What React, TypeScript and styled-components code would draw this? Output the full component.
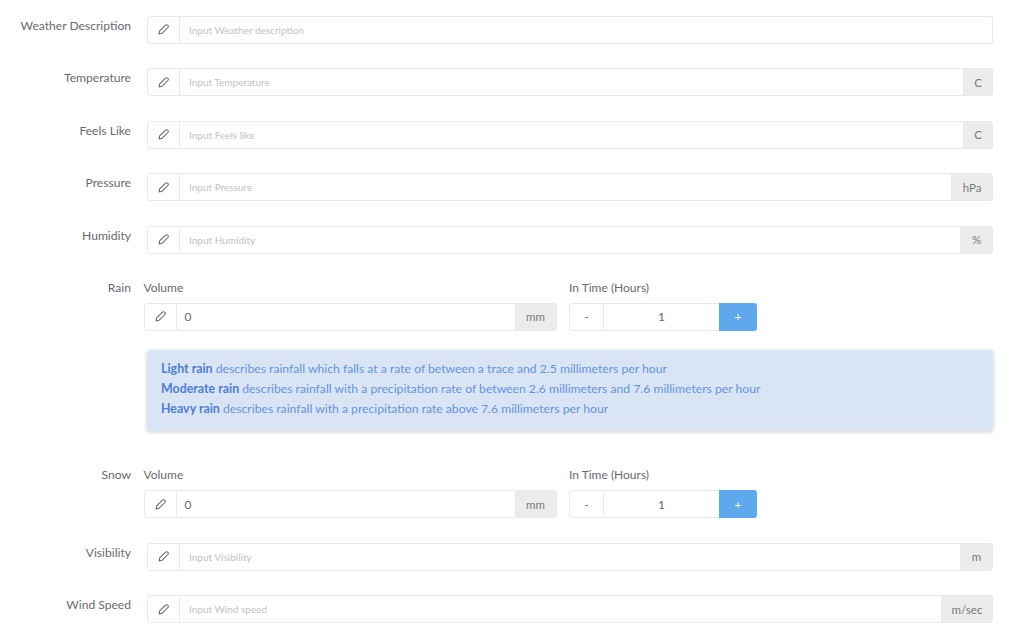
import React from "react";
import styled, { createGlobalStyle } from "styled-components";

const Global = createGlobalStyle`
  html, body { margin: 0; padding: 0; background: #fff; }
  body { font-family: "Lato", "Noto Sans", sans-serif; color: #5c6066; overflow: hidden; }
`;

const Page = styled.div`
  width: 1024px;
  height: 643px;
  padding: 15.75px 31px 0 0;
  box-sizing: border-box;
  display: flex;
  flex-direction: column;
  & > * { flex: none; }
`;

const Row = styled.div<{ $gap?: number }>`
  display: grid;
  grid-template-columns: 131px 1fr;
  column-gap: 16px;
  height: 28px;
  margin-bottom: ${(p) => p.$gap ?? 24.5}px;
`;

const Label = styled.div`
  text-align: right;
  font-size: 12.1px;
  line-height: 20px;
  color: #666a70;
`;

const Group = styled.div`
  display: flex;
  height: 28px;
  box-sizing: border-box;
`;

const IconBox = styled.div`
  width: 33px;
  flex: none;
  box-sizing: border-box;
  border: 1px solid #e4eaee;
  border-radius: 3px 0 0 3px;
  display: flex;
  align-items: center;
  justify-content: center;
`;

const Field = styled.div<{ $placeholder?: boolean; $open?: boolean }>`
  flex: 1;
  box-sizing: border-box;
  border: 1px solid #e4eaee;
  border-left: none;
  ${(p) => (p.$open ? "border-right: none;" : "border-radius: 0 3px 3px 0;")}
  padding-left: ${(p) => (p.$placeholder ? 9 : 8)}px;
  display: flex;
  align-items: center;
  font-size: ${(p) => (p.$placeholder ? 10 : 12)}px;
  color: ${(p) => (p.$placeholder ? "#bfc2c5" : "#666a70")};
`;

const Addon = styled.div<{ $width: number }>`
  flex: none;
  box-sizing: border-box;
  width: ${(p) => p.$width}px;
  background: #ececec;
  border: 1px solid #e6eaec;
  border-radius: 0 3px 3px 0;
  display: flex;
  align-items: center;
  justify-content: center;
  font-size: 11.5px;
  color: #74787c;
`;

const SplitRow = styled.div<{ $gap: number }>`
  display: grid;
  grid-template-columns: 131px 413px 188px;
  column-gap: 12.5px;
  margin-bottom: ${(p) => p.$gap}px;
`;

const Col = styled.div`
  display: flex;
  flex-direction: column;
  gap: 7.25px;
`;

const SubLabel = styled.div`
  font-size: 12px;
  line-height: 16px;
  color: #666a70;
`;

const SplitLabel = styled(Label)`
  line-height: 16px;
`;

const Stepper = styled.div`
  display: flex;
  height: 28px;
`;

const Minus = styled.div`
  width: 35px;
  box-sizing: border-box;
  border: 1px solid #e4eaee;
  border-radius: 3px 0 0 3px;
  display: flex;
  align-items: center;
  justify-content: center;
  font-size: 12px;
  color: #666a70;
`;

const Count = styled.div`
  flex: 1;
  box-sizing: border-box;
  border-top: 1px solid #e4eaee;
  border-bottom: 1px solid #e4eaee;
  display: flex;
  align-items: center;
  justify-content: center;
  font-size: 12px;
  color: #666a70;
`;

const Plus = styled.div`
  width: 38px;
  background: #5fa8ee;
  border-radius: 0 3px 3px 0;
  display: flex;
  align-items: center;
  justify-content: center;
  font-size: 12px;
  color: #fff;
`;

const Alert = styled.div`
  margin: 0 0 36.25px 147px;
  height: 81px;
  box-sizing: border-box;
  padding: 9px 14px;
  background: #d9e4f5;
  border-radius: 3px;
  box-shadow: 0 1px 4px rgba(0, 0, 0, 0.2);
  font-size: 12.18px;
  line-height: 20px;
  color: #6494e0;
  b { font-weight: 700; font-size: 12.4px; color: #4a7fd6; }
`;

const Pencil = () => (
  <svg width="11" height="11" viewBox="0 0 12 12" fill="none" stroke="#626669" strokeWidth="1.1" strokeLinejoin="round">
    <path d="M8.2 1.2a1.5 1.5 0 0 1 2.2 0l.4.4a1.5 1.5 0 0 1 0 2.2L4.4 10.2 1.2 10.8l.6-3.2z" />
  </svg>
);

const InputRow = ({ label, placeholder, unit, unitWidth, gap }: { label: string; placeholder: string; unit?: string; unitWidth?: number; gap?: number }) => (
  <Row $gap={gap}>
    <Label>{label}</Label>
    <Group>
      <IconBox><Pencil /></IconBox>
      <Field $placeholder $open={!!unit}>{placeholder}</Field>
      {unit && <Addon $width={unitWidth ?? 32}>{unit}</Addon>}
    </Group>
  </Row>
);

const Split = ({ label, gap }: { label: string; gap: number }) => (
  <SplitRow $gap={gap}>
    <SplitLabel>{label}</SplitLabel>
    <Col>
      <SubLabel>Volume</SubLabel>
      <Group>
        <IconBox><Pencil /></IconBox>
        <Field $open>0</Field>
        <Addon $width={42}>mm</Addon>
      </Group>
    </Col>
    <Col>
      <SubLabel>In Time (Hours)</SubLabel>
      <Stepper>
        <Minus>-</Minus>
        <Count>1</Count>
        <Plus>+</Plus>
      </Stepper>
    </Col>
  </SplitRow>
);

export default function App() {
  return (
    <Page>
      <Global />
      <InputRow label="Weather Description" placeholder="Input Weather description" />
      <InputRow label="Temperature" placeholder="Input Temperature" unit="C" unitWidth={30} />
      <InputRow label="Feels Like" placeholder="Input Feels like" unit="C" unitWidth={30} />
      <InputRow label="Pressure" placeholder="Input Pressure" unit="hPa" unitWidth={42} />
      <InputRow label="Humidity" placeholder="Input Humidity" unit="%" unitWidth={33} gap={25.75} />
      <Split label="Rain" gap={19} />
      <Alert>
        <div><b>Light rain</b> describes rainfall which falls at a rate of between a trace and 2.5 millimeters per hour</div>
        <div><b>Moderate rain</b> describes rainfall with a precipitation rate of between 2.6 millimeters and 7.6 millimeters per hour</div>
        <div><b>Heavy rain</b> describes rainfall with a precipitation rate above 7.6 millimeters per hour</div>
      </Alert>
      <Split label="Snow" gap={24.6} />
      <InputRow label="Visibility" placeholder="Input Visibility" unit="m" unitWidth={33} />
      <InputRow label="Wind Speed" placeholder="Input Wind speed" unit="m/sec" unitWidth={52} />
    </Page>
  );
}
